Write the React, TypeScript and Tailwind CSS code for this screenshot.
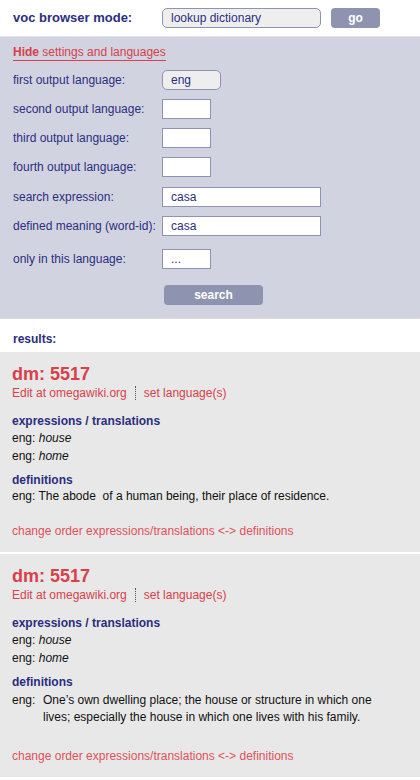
import React from 'react';

const navy = 'text-[#2b2e80]';

function Row({ label, children, className = '' }: { label: string; children: React.ReactNode; className?: string }) {
  return (
    <div className={`flex items-center h-[20px] ${className}`}>
      <span className={`w-[149px] text-[12px] ${navy}`}>{label}</span>
      {children}
    </div>
  );
}

function Box({ w, value = '', rounded = false }: { w: string; value?: string; rounded?: boolean }) {
  return (
    <div
      className={`${w} h-[20px] border border-[#8f93b3] flex items-center px-[8px] text-[12px] ${navy} ${
        rounded ? 'rounded-[5px] bg-[#eeeeee]' : 'bg-white'
      }`}
    >
      {value}
    </div>
  );
}

interface Result {
  id: string;
  expressions: string[];
  definition: string;
  hanging?: boolean;
}

const results: Result[] = [
  {
    id: '5517',
    expressions: ['house', 'home'],
    definition: 'The abode\u00a0 of a human being, their place of residence.'
  },
  {
    id: '5517',
    expressions: ['house', 'home'],
    definition: 'One\u2019s own dwelling place; the house or structure in which one lives; especially the house in which one lives with his family.',
    hanging: true
  }
];

function ResultCard({ r }: { r: Result }) {
  return (
    <div className="bg-[#e8e8e8] px-[12px] pt-[12px] pb-[13px]">
      <div className="text-[18px] font-bold text-[#d8404a] leading-[20px]">dm: {r.id}</div>
      <div className="flex items-center text-[12px] text-[#d8404a] leading-[16px] mt-[1px]">
        <span>Edit at omegawiki.org</span>
        <span className="mx-[8px] h-[14px] border-l border-dotted border-[#555]" />
        <span>set language(s)</span>
      </div>
      <div className={`mt-[12px] text-[12px] font-bold ${navy} leading-[16px]`}>expressions / translations</div>
      {r.expressions.map((e, i) => (
        <div key={i} className="text-[12px] text-[#111] leading-[18px]">
          eng: <i>{e}</i>
        </div>
      ))}
      <div className={`mt-[7px] text-[12px] font-bold ${navy} leading-[16px]`}>definitions</div>
      {r.hanging ? (
        <>
          <div className="flex text-[12px] text-[#111] leading-[17px] mt-[2px]">
            <span className="w-[31px] shrink-0">eng:</span>
            <span className="w-[340px]">{r.definition}</span>
          </div>
          <div className="mt-[22px] text-[12px] text-[#e0505a] leading-[16px]">
            change order expressions/translations &lt;-&gt; definitions
          </div>
        </>
      ) : (
        <>
          <div className="text-[12px] text-[#111] leading-[17px]">eng: {r.definition}</div>
          <div className="mt-[18px] text-[12px] text-[#e0505a] leading-[16px]">
            change order expressions/translations &lt;-&gt; definitions
          </div>
        </>
      )}
    </div>
  );
}

export default function App() {
  return (
    <div className="w-[420px] min-h-[780px] bg-white font-['Liberation_Sans',Arial,sans-serif]">
      <div className="h-[37px] flex items-center px-[13px] border-b border-[#e2e2e8]">
        <span className={`w-[149px] text-[13px] font-bold ${navy}`}>voc browser mode:</span>
        <Box w="w-[159px]" value="lookup dictionary" rounded />
        <div className="ml-[10px] w-[49px] h-[20px] rounded-[4px] bg-[#8e93b0] text-white font-bold text-[12px] flex items-center justify-center">
          go
        </div>
      </div>

      <div className="bg-[#d1d3e0] px-[13px] pt-[2px] pb-[13px] border-b border-[#dcdce2]">
        <div className="text-[12px] text-[#d8404a] leading-[15px] inline-block border-b border-[#d8404a]">
          <b>Hide</b> settings and languages
        </div>
        <div className="flex flex-col gap-[9px] mt-[7px]">
          <Row label="first output language:">
            <Box w="w-[59px]" value="eng" rounded />
          </Row>
          <Row label="second output language:">
            <Box w="w-[49px]" />
          </Row>
          <Row label="third output language:">
            <Box w="w-[49px]" />
          </Row>
          <Row label="fourth output language:">
            <Box w="w-[49px]" />
          </Row>
          <Row label="search expression:" className="mt-[1px]">
            <Box w="w-[159px]" value="casa" />
          </Row>
          <Row label="defined meaning (word-id):">
            <Box w="w-[159px]" value="casa" />
          </Row>
          <Row label="only in this language:" className="mt-[4px]">
            <Box w="w-[49px]" value="..." />
          </Row>
        </div>
        <div className="mt-[16px] ml-[151px] w-[99px] h-[20px] rounded-[4px] bg-[#8e93b0] text-white font-bold text-[12px] flex items-center justify-center">
          search
        </div>
      </div>

      <div className={`h-[33px] flex items-center px-[13px] pt-[6px] text-[12px] font-bold ${navy}`}>results:</div>

      <div className="flex flex-col gap-[2px]">
        {results.map((r, i) => (
          <ResultCard key={i} r={r} />
        ))}
      </div>
    </div>
  );
}
